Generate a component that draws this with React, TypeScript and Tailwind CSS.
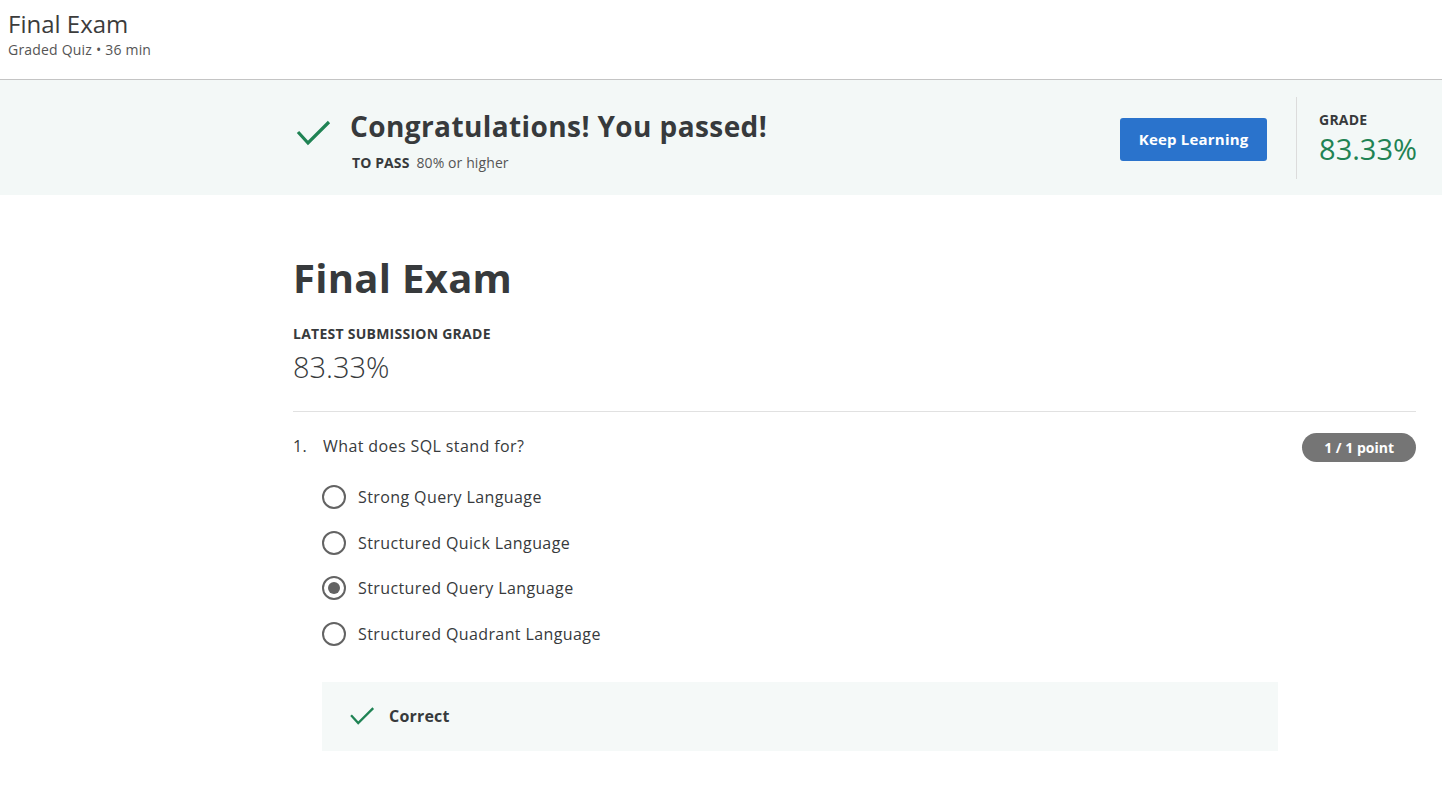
import React from "react";

const CheckMark = ({ className }: { className?: string }) => (
  <svg viewBox="0 0 36 28" className={className} fill="none">
    <path d="M2 13 L12 24 L33 3" stroke="#1f8354" strokeWidth="3.2" />
  </svg>
);

const options = [
  "Strong Query Language",
  "Structured Quick Language",
  "Structured Query Language",
  "Structured Quadrant Language",
];

const Radio = ({ checked }: { checked: boolean }) => (
  <span className="flex h-6 w-6 items-center justify-center rounded-full border-2 border-[#636363] bg-white">
    {checked && <span className="h-3 w-3 rounded-full bg-[#636363]" />}
  </span>
);

export default function App() {
  return (
    <div className="min-h-screen bg-white text-[#373a3c] font-['Open_Sans',sans-serif]">
      {/* top bar */}
      <header className="h-[80px] border-b border-[#c4c4c4] px-2 pt-[8px]">
        <h1 className="text-[24px] leading-[32px] text-[#3c3c3c]">Final Exam</h1>
        <p className="text-[14px] leading-[20px] tracking-[0.2px] text-[#555]">Graded Quiz • 36 min</p>
      </header>

      {/* result banner */}
      <section className="flex h-[115px] items-center bg-[#f3f8f7] pl-[296px] pr-[25px]">
        <div className="flex flex-1 items-start">
          <CheckMark className="mt-[16px] h-[28px] w-[36px]" />
          <div className="ml-[18px] mt-[4px]">
            <h2 className="text-[28px] font-bold leading-[38px] tracking-[0.4px] text-[#373a3c]">
              Congratulations! You passed!
            </h2>
            <p className="mt-[8px] text-[14px] leading-[20px] tracking-[0.1px] text-[#555]">
              <span className="ml-[2px] mr-[7px] font-bold text-[#373a3c]">TO PASS</span>
              80% or higher
            </p>
          </div>
        </div>
        <button className="mt-[4px] h-[43px] w-[147px] rounded-[3px] bg-[#2a73cc] text-[15px] font-bold tracking-[0.2px] text-white">
          Keep Learning
        </button>
        <div className="ml-[29px] h-[82px] border-l border-[#dcdcdc] pl-[22px] pt-[14px]">
          <p className="text-[14px] font-bold leading-[18px] tracking-[0.2px] text-[#373a3c]">GRADE</p>
          <p className="mt-[1.5px] text-[29px] leading-[38px] text-[#1f8354]">83.33%</p>
        </div>
      </section>

      {/* content */}
      <main className="pl-[293px] pr-[26px] pt-[55px]">
        <h2 className="text-[40px] font-bold leading-[56px] tracking-[0.3px] text-[#373a3c]">Final Exam</h2>
        <p className="mt-[19px] text-[14px] font-bold leading-[18px] tracking-[0.25px] text-[#373a3c]">
          LATEST SUBMISSION GRADE
        </p>
        <p className="mt-[6px] text-[29px] font-light leading-[36px] text-[#373a3c]">83.33%</p>

        <div className="mt-[26px] border-t border-[#e1e1e1] pt-[21px]">
          <div className="flex items-start justify-between">
            <p className="flex text-[16px] leading-[26px] tracking-[0.4px] text-[#373a3c]">
              <span className="w-[30px]">1.</span>
              What does SQL stand for?
            </p>
            <span className="rounded-full bg-[#757575] px-[22px] py-[4px] text-[14px] font-bold leading-[21px] text-white">
              1 / 1 point
            </span>
          </div>

          <ul className="ml-[29px] mt-[23px] flex flex-col gap-[21.5px]">
            {options.map((opt, i) => (
              <li key={opt} className="flex h-[24px] items-center gap-[12px]">
                <Radio checked={i === 2} />
                <span className="text-[16px] tracking-[0.4px] text-[#373a3c]">{opt}</span>
              </li>
            ))}
          </ul>

          <div className="ml-[29px] mr-[138px] mt-[36px] flex h-[69px] items-center bg-[#f5f9f8] pl-[27px]">
            <CheckMark className="h-[20px] w-[27px]" />
            <span className="ml-[13px] text-[16px] font-bold tracking-[0.2px] text-[#373a3c]">Correct</span>
          </div>
        </div>
      </main>
    </div>
  );
}
